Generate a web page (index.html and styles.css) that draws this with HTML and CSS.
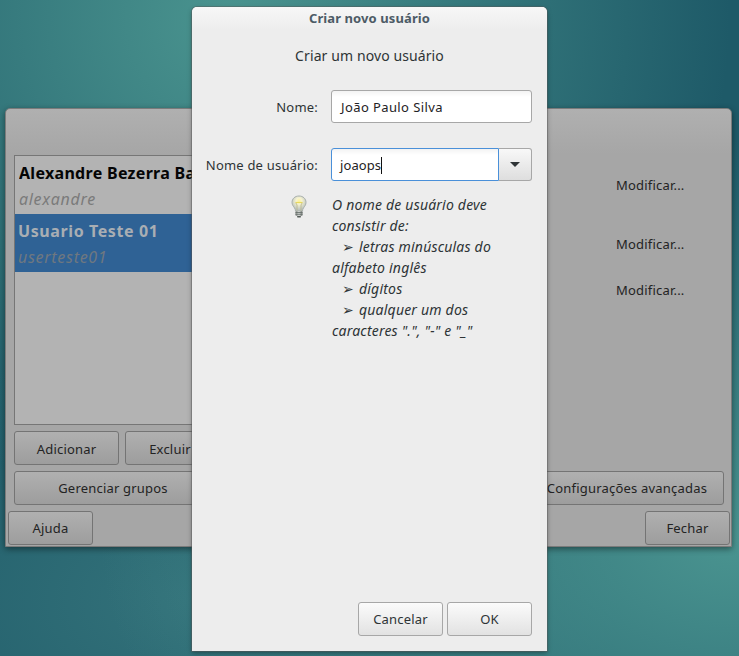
FILE: index.html
```html
<!DOCTYPE html>
<html lang="pt">
<head>
<meta charset="utf-8">
<title>Criar novo usuário</title>
<link rel="stylesheet" href="styles.css">
</head>
<body>
<div class="desktop">
  <section class="users-window">
    <div class="users-main">
      <div class="user-column">
        <ul class="user-list">
          <li class="user-row">
            <span class="user-name">Alexandre Bezerra Barbosa</span>
            <span class="user-login">alexandre</span>
          </li>
          <li class="user-row user-row-selected">
            <span class="user-name">Usuario Teste 01</span>
            <span class="user-login">userteste01</span>
          </li>
        </ul>
        <div class="list-actions">
          <button class="btn btn-dim btn-add">Adicionar</button>
          <button class="btn btn-dim btn-del">Excluir</button>
        </div>
      </div>
      <div class="modify-column">
        <span class="modify modify-a">Modificar...</span>
        <span class="modify modify-b">Modificar...</span>
        <span class="modify modify-c">Modificar...</span>
      </div>
    </div>
    <div class="wide-actions">
      <button class="btn btn-dim btn-groups">Gerenciar grupos</button>
      <button class="btn btn-dim btn-advanced">Configurações avançadas</button>
    </div>
    <div class="window-actions">
      <button class="btn btn-dim btn-window">Ajuda</button>
      <button class="btn btn-dim btn-window">Fechar</button>
    </div>
  </section>

  <section class="dialog">
    <header class="dialog-title">Criar novo usuário</header>
    <div class="dialog-body">
      <h1 class="dialog-heading">Criar um novo usuário</h1>
      <div class="form-row form-row-name">
        <label class="form-label">Nome:</label>
        <div class="entry">João Paulo Silva</div>
      </div>
      <div class="form-row form-row-user">
        <label class="form-label">Nome de usuário:</label>
        <div class="combo">
          <div class="combo-entry">joaops<span class="caret"></span></div>
          <div class="combo-arrow"><span class="arrow-down"></span></div>
        </div>
      </div>
      <div class="hint">
        <svg class="bulb" width="18" height="24" viewBox="0 0 18 24" aria-hidden="true">
          <defs>
            <radialGradient id="glass" cx="50%" cy="34%" r="58%">
              <stop offset="0" stop-color="#fff39a"/>
              <stop offset="0.35" stop-color="#f6f3d2"/>
              <stop offset="1" stop-color="#bcc3bf"/>
            </radialGradient>
            <linearGradient id="base" x1="0" y1="0" x2="1" y2="0">
              <stop offset="0" stop-color="#7f8380"/>
              <stop offset="0.5" stop-color="#d8dad8"/>
              <stop offset="1" stop-color="#6f7370"/>
            </linearGradient>
          </defs>
          <path d="M9 1C4.800 1 2 3.900 2 7.400c0 2.600 1.500 4 2.500 5.500.7 1 .9 2 1 3.100h7c.1-1.100.3-2.100 1-3.100C14.500 11.400 16 10 16 7.400 16 3.900 13.200 1 9 1z" fill="url(#glass)" stroke="#a9b0ad"/>
          <path d="M5.500 7.500h7" stroke="#e8d95c" stroke-width="1.200"/>
          <path d="M7 15.500V10L5.800 7.800M11 15.500V10l1.200-2.200" fill="none" stroke="#b9b58a" stroke-width=".8"/>
          <rect x="5.500" y="16" width="7" height="5" rx="1" fill="url(#base)"/>
          <path d="M5.500 17.500h7M5.500 19.300h7" stroke="#5f6965" stroke-width=".8"/>
          <rect x="7" y="21" width="4" height="1.500" rx=".7" fill="#555c59"/>
        </svg>
        <p class="hint-text">O nome de usuário deve consistir de:<br><span class="hint-item"><span class="hint-arrow">➢</span>letras minúsculas do</span> alfabeto inglês<br><span class="hint-item"><span class="hint-arrow">➢</span>dígitos</span><br><span class="hint-item"><span class="hint-arrow">➢</span>qualquer um dos</span> caracteres ".", "-" e "_"</p>
      </div>
      <div class="dialog-actions">
        <button class="btn btn-cancel">Cancelar</button>
        <button class="btn btn-ok">OK</button>
      </div>
    </div>
  </section>
</div>
</body>
</html>
```

FILE: styles.css
```css
* { box-sizing: border-box; }
html, body { margin: 0; padding: 0; height: 100%; }
body { overflow: hidden; font-family: "Noto Sans", "DejaVu Sans", sans-serif; font-size: 13px; letter-spacing: .2px; color: #2e3436; }

.desktop {
  position: relative;
  width: 739px;
  height: 656px;
  overflow: hidden;
  background:
    radial-gradient(ellipse 500px 500px at 230px 20px, #4a948f 0, rgba(74, 148, 143, 0) 100%),
    radial-gradient(ellipse 640px 400px at 740px 540px, #4a9490 0, rgba(74, 148, 144, 0) 100%),
    radial-gradient(ellipse 420px 260px at 200px 600px, rgba(70, 135, 138, .55) 0, rgba(70, 135, 138, 0) 100%),
    #1e5a68;
}

.btn {
  display: block;
  margin: 0;
  padding: 0;
  height: 34px;
  font: inherit;
  letter-spacing: inherit;
  color: #2e3436;
  text-align: center;
  border: 1px solid #a7a7a7;
  border-radius: 3px;
  background: linear-gradient(#fbfbfb, #e2e2e2);
}
.btn-dim {
  color: #232323;
  border-color: #747474;
  background: linear-gradient(#b0b0b0, #9d9d9d);
}

/* Background window, dimmed by the modal dialog */
.users-window {
  position: absolute;
  left: 5px;
  top: 108px;
  width: 727px;
  height: 439px;
  display: flex;
  flex-direction: column;
  padding: 46px 1px 1px 2px;
  border: 1px solid #7b7b7b;
  border-radius: 5px 5px 0 0;
  background: linear-gradient(#b0b0b0 0, #a6a6a6 45px, #a6a6a6 100%);
  box-shadow: 0 2px 6px rgba(0, 0, 0, .45);
}
.users-main { display: flex; justify-content: space-between; padding: 0 6px; }
.user-column { width: 250px; }
.user-list {
  list-style: none;
  margin: 0;
  padding: 0;
  height: 270px;
  overflow: hidden;
  border: 1px solid #767676;
  background: #b3b3b3;
}
.user-row { display: flex; flex-direction: column; height: 58px; padding: 7px 4px 0; white-space: nowrap; }
.user-name { width: 173px; overflow: hidden; font-size: 16px; font-weight: 700; line-height: 21px; letter-spacing: .3px; color: #050505; }
.user-login { font-size: 16px; font-style: italic; line-height: 21px; margin-top: 5px; letter-spacing: .7px; color: #7b7b7b; }
.user-row-selected { background: #2f6295; padding-left: 3px; }
.user-row-selected .user-name { letter-spacing: .6px; color: #a9aeb3; }
.user-row-selected .user-login { color: #6f7880; }

.list-actions { display: flex; gap: 6px; margin-top: 6px; }
.list-actions .btn { padding-top: 2px; }
.btn-add { width: 105px; }
.btn-del { width: 90px; }

.modify-column { display: flex; flex-direction: column; width: 108px; padding-top: 21px; }
.modify { color: #232323; line-height: 18px; height: 18px; }
.modify-b { margin-top: 41px; }
.modify-c { margin-top: 28px; }

.wide-actions { display: flex; justify-content: space-between; margin-top: 6px; padding: 0 6px; }
.btn-groups { width: 198px; }
.btn-advanced { width: 194px; }

.window-actions { display: flex; justify-content: space-between; margin-top: 6px; }
.btn-window { width: 85px; }

/* Modal dialog */
.dialog {
  position: absolute;
  left: 192px;
  top: 7px;
  width: 355px;
  height: 644px;
  display: flex;
  flex-direction: column;
  border-radius: 5px 5px 0 0;
  background: #ededed;
  box-shadow: 0 0 0 1px rgba(90, 90, 90, .45), 0 2px 5px rgba(0, 0, 0, .35);
}
.dialog-title {
  flex: none;
  height: 23px;
  line-height: 22px;
  text-align: center;
  font-weight: 700;
  font-size: 13px;
  letter-spacing: .1px;
  color: #4d5b66;
  background: linear-gradient(#f7f7f7, #ededed);
  border-radius: 5px 5px 0 0;
}
.dialog-body { flex: 1; display: flex; flex-direction: column; }
.dialog-heading {
  margin: 16px 0 0;
  font-size: 14px;
  font-weight: 400;
  line-height: 20px;
  letter-spacing: .1px;
  text-align: center;
  color: #2e3436;
}
.form-row { display: flex; align-items: center; padding: 0 15px 0 0; }
.form-row-name { margin-top: 24px; }
.form-row-user { margin-top: 25px; }
.form-label { width: 126px; text-align: right; margin-right: 13px; color: #2e3436; white-space: nowrap; }
.entry {
  flex: 1;
  height: 33px;
  line-height: 33px;
  padding-left: 9px;
  letter-spacing: .4px;
  color: #1e2224;
  border: 1px solid #a7a7a7;
  border-radius: 3px;
  background: linear-gradient(#f3f3f3, #fff 6px);
}
.combo { flex: 1; display: flex; height: 33px; }
.combo-entry {
  flex: 1;
  line-height: 33px;
  padding-left: 8px;
  letter-spacing: .1px;
  color: #1e2224;
  border: 1px solid #4a90d9;
  border-radius: 3px 0 0 3px;
  background: linear-gradient(#f3f3f3, #fff 6px);
}
.caret { display: inline-block; width: 1px; height: 17px; vertical-align: -4px; background: #111; }
.combo-arrow {
  width: 33px;
  display: flex;
  align-items: center;
  justify-content: center;
  border: 1px solid #a7a7a7;
  border-left: 0;
  border-radius: 0 3px 3px 0;
  background: linear-gradient(#f8f8f8, #dedede);
}
.arrow-down { width: 0; height: 0; border-left: 5px solid transparent; border-right: 5px solid transparent; border-top: 5px solid #2e3436; }

.hint { display: flex; margin-top: 13px; padding-left: 98px; }
.bulb { flex: none; margin: 1px 24px 0 0; }
.hint-text { margin: 0; width: 180px; font-size: 14px; font-style: italic; line-height: 21px; color: #2e3436; }
.hint-item { padding-left: 10px; }
.hint-arrow { display: inline-block; width: 17px; font-family: "DejaVu Sans", sans-serif; font-size: 14px; line-height: 12px; font-style: normal; }

.dialog-actions { display: flex; justify-content: flex-end; gap: 4px; margin-top: auto; padding: 0 15px 15px 0; }
.btn-cancel { width: 85px; }
.btn-ok { width: 85px; }
```
